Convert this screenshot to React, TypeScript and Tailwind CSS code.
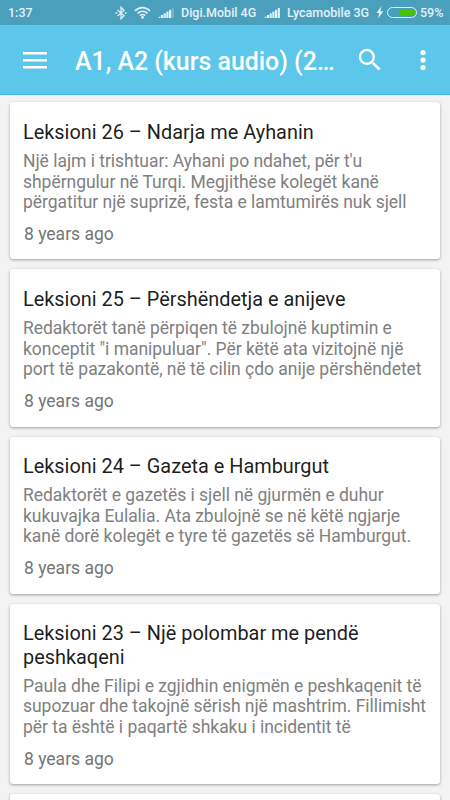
const lessons = [
  {
    title: "Leksioni 26 – Ndarja me Ayhanin",
    lines: [
      "Një lajm i trishtuar: Ayhani po ndahet, për t'u",
      "shpërngulur në Turqi. Megjithëse kolegët kanë",
      "përgatitur një suprizë, festa e lamtumirës nuk sjell",
    ],
    age: "8 years ago",
  },
  {
    title: "Leksioni 25 – Përshëndetja e anijeve",
    lines: [
      "Redaktorët tanë përpiqen të zbulojnë kuptimin e",
      "konceptit \"i manipuluar\". Për këtë ata vizitojnë një",
      "port të pazakontë, në të cilin çdo anije përshëndetet",
    ],
    age: "8 years ago",
  },
  {
    title: "Leksioni 24 – Gazeta e Hamburgut",
    lines: [
      "Redaktorët e gazetës i sjell në gjurmën e duhur",
      "kukuvajka Eulalia. Ata zbulojnë se në këtë ngjarje",
      "kanë dorë kolegët e tyre të gazetës së Hamburgut.",
    ],
    age: "8 years ago",
  },
  {
    title: "Leksioni 23 – Një polombar me pendë peshkaqeni",
    lines: [
      "Paula dhe Filipi e zgjidhin enigmën e peshkaqenit të",
      "supozuar dhe takojnë sërish një mashtrim. Fillimisht",
      "për ta është i paqartë shkaku i incidentit të",
    ],
    age: "8 years ago",
  },
]

function Signal({ weak }: { weak?: boolean }) {
  return (
    <svg className="mt-px" width="17" height="12" viewBox="0 0 17 12" fill="#dff0f7">
      <path d="M0 11 2.300 9.300V11z" />
      <rect x="2.9" y="8" width="2.2" height="3" />
      <rect x="5.6" y="6.4" width="2.2" height="4.6" />
      <rect x="8.3" y="4.6" width="2.2" height="6.4" />
      <rect x="11" y="2.8" width="2.2" height="8.2" />
      <rect x="13.7" y="1" width="2.2" height="10" opacity={weak ? 0.3 : 1} />
    </svg>
  )
}

function StatusBar() {
  return (
    <div className="flex h-[25px] items-center bg-[#4a9fbc] pl-2 text-[12.5px] font-medium text-[#e3f2f8]">
      <span className="w-[107px] pt-px">1:37</span>
      <svg className="mr-[7px]" width="12" height="14" viewBox="0 0 12 14" fill="none" stroke="#dff0f7" strokeWidth="1.3">
        <path d="M2.500 3.900 9 9.800 6 12.800V1.200l3 3-6.500 5.900" />
        <path d="M.4 7h1.800M9.800 7h1.800" strokeWidth="1.700" />
      </svg>
      <svg className="mr-[7px]" width="17" height="13" viewBox="0 0 17 13" fill="none" stroke="#dff0f7" strokeWidth="1.7">
        <path d="M1 5C5.200.6 11.800.6 16 5M3.500 7.400c2.900-2.900 7.100-2.900 10 0M5.900 9.600c1.500-1.500 3.700-1.500 5.200 0" />
        <circle cx="8.5" cy="11.400" r="1.400" fill="#dff0f7" stroke="none" />
      </svg>
      <Signal weak />
      <span className="ml-[6px] w-[83px] pt-px whitespace-nowrap">Digi.Mobil 4G</span>
      <Signal />
      <span className="ml-[6px] w-[89px] pt-px whitespace-nowrap">Lycamobile 3G</span>
      <svg width="8" height="13" viewBox="0 0 8 13" fill="#dff0f7">
        <path d="M5.500 0 .4 7h2.800L2 12.500 7.400 5.200H4.300z" />
      </svg>
      <div className="ml-[3px] flex h-[11px] w-[30px] rounded-full border border-[#dff0f7] p-px">
        <div className="ml-auto h-full w-[16px] rounded-r-full bg-[#46c400]" />
      </div>
      <span className="ml-[3px] pt-px">59%</span>
    </div>
  )
}

function Toolbar() {
  return (
    <div className="flex h-[70px] items-center border-b border-[#3fbbe6] bg-[#5cc7ea] pl-[23px] text-white">
      <svg className="mt-px" width="24" height="17" viewBox="0 0 24 17" fill="currentColor">
        <path d="M0 0h24v2.600H0zM0 7h24v2.600H0zM0 14h24v2.600H0z" />
      </svg>
      <h1 className="ml-[28px] w-[270px] pt-[4px] text-[24.900px] font-medium whitespace-nowrap">A1, A2 (kurs audio) (2…</h1>
      <svg className="ml-[10px]" width="30" height="30" viewBox="0 0 24 24" fill="currentColor">
        <path d="M15.500 14h-.79l-.28-.27A6.470 6.470 0 0 0 16 9.500 6.500 6.500 0 1 0 9.500 16c1.610 0 3.090-.59 4.230-1.570l.27.28v.79l5 4.990L20.490 19l-4.990-5zm-6 0C7.010 14 5 11.990 5 9.500S7.010 5 9.500 5 14 7.010 14 9.500 11.990 14 9.500 14z" />
      </svg>
      <svg className="ml-[23px]" width="30" height="30" viewBox="0 0 24 24" fill="currentColor">
        <circle cx="12" cy="6" r="2.1" />
        <circle cx="12" cy="12" r="2.1" />
        <circle cx="12" cy="18" r="2.1" />
      </svg>
    </div>
  )
}

export default function App() {
  return (
    <div className="h-[800px] w-[450px] overflow-hidden bg-[#f3f3f3] font-['Roboto',sans-serif]">
      <StatusBar />
      <Toolbar />
      <div className="flex flex-col gap-[10px] px-[10px] pt-[7.400px]">
        {lessons.map((lesson) => (
          <div key={lesson.title} className="rounded-[3px] bg-white px-[13px] pt-[18.600px] pb-[14.700px] shadow-[0_1px_3px_rgba(0,0,0,0.35)]">
            <h2 className="text-[19.900px] leading-[23.600px] text-black/90">{lesson.title}</h2>
            <div className="mt-[6.500px] text-[17.500px] leading-[20.500px] tracking-[-0.03px] text-[#808080]">
              {lesson.lines.map((line) => (
                <p key={line} className="whitespace-nowrap">{line}</p>
              ))}
            </div>
            <p className="mt-[11.700px] pl-px text-[17.500px] leading-[20.500px] text-[#757575]">{lesson.age}</p>
          </div>
        ))}
        <div className="h-[157px] shrink-0 rounded-[3px] bg-white shadow-[0_1px_3px_rgba(0,0,0,0.35)]" />
      </div>
    </div>
  )
}
